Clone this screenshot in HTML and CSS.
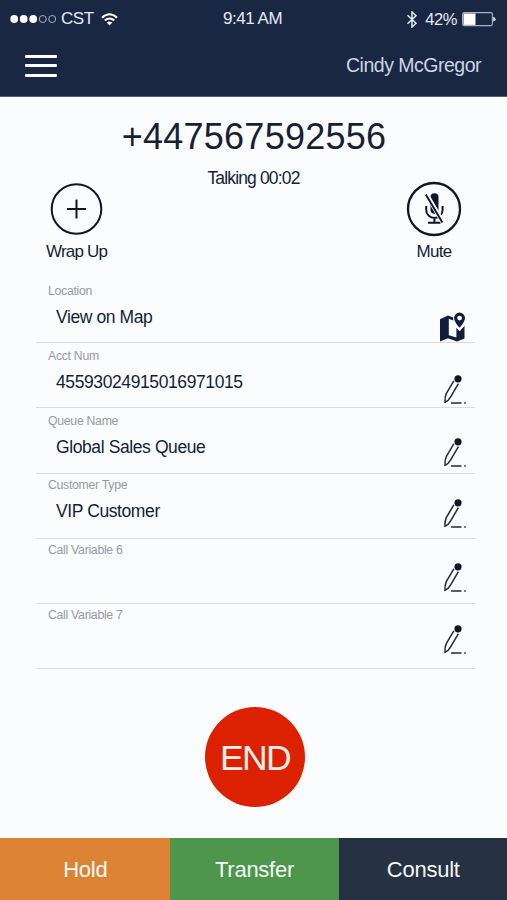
FILE: index.html
```html
<!DOCTYPE html>
<html lang="en">
<head>
<meta charset="utf-8">
<title>Call</title>
<link rel="stylesheet" href="styles.css">
</head>
<body>
<svg width="0" height="0" class="defs">
  <symbol id="pencil" viewBox="0 0 24 30">
    <circle cx="15" cy="3.8" r="3.6" fill="#10152a"/>
    <path d="M10.8 5.8 3.4 18.4Q1.7 22 2 27.2 5.6 25.8 7.8 21.6L15.4 8.6" fill="none" stroke="#282a31" stroke-width="1.5"/>
    <path d="M8 28h10.5M21.2 28h1.6" stroke="#282a31" stroke-width="1.3"/>
  </symbol>
</svg>
<header class="header">
  <div class="status">
    <div class="status-left">
      <svg width="46" height="12" viewBox="0 0 46 12"><g fill="#fff"><circle cx="4.2" cy="6" r="3.9"/><circle cx="13.7" cy="6" r="3.9"/><circle cx="23.2" cy="6" r="3.9"/></g><g fill="none" stroke="#a9b3c5" stroke-width="1"><circle cx="32.8" cy="6" r="3.5"/><circle cx="42.2" cy="6" r="3.5"/></g></svg>
      <span class="carrier">CST</span>
      <svg class="wifi" width="17" height="13" viewBox="0 0 17 13"><g fill="none" stroke="#fff" stroke-width="2"><path d="M1 4.7Q8.5-2.2 16 4.7"/><path d="M3.7 7.6Q8.5 3.3 13.3 7.6"/></g><path d="M5.7 9.6Q8.5 7.2 11.3 9.6L8.5 12.5Z" fill="#fff"/></svg>
    </div>
    <div class="time">9:41 AM</div>
    <div class="status-right">
      <svg width="12" height="17" viewBox="0 0 12 17"><path d="M1.5 4.3 10 12.3 6 16V1L10 4.7 1.5 12.7" fill="none" stroke="#e3ebf7" stroke-width="1.5"/></svg>
      <span class="percent">42%</span>
      <svg width="34" height="15" viewBox="0 0 34 15"><rect x=".6" y=".6" width="29.8" height="13" rx="1.5" fill="none" stroke="#a9b3c5" stroke-width="1.1"/><path d="M1.5 1.5h12v11.4h-12z" fill="#fff"/><path d="M31.2 4.8q2.4.6 2.4 2.4t-2.4 2.4z" fill="#d7dfec"/></svg>
    </div>
  </div>
  <div class="nav">
    <div class="menu"><i></i><i></i><i></i></div>
    <div class="user">Cindy McGregor</div>
  </div>
</header>
<main class="main">
  <h1 class="number">+447567592556</h1>
  <div class="state">Talking 00:02</div>
  <div class="actions">
    <div class="action">
      <svg width="54" height="54" viewBox="0 0 54 54" fill="none" stroke="#10152a" stroke-width="2"><circle cx="26.5" cy="27" r="24.8"/><path d="M17 27h19M26.5 17.5v19"/></svg>
      <span class="wrap-label">Wrap Up</span>
    </div>
    <div class="action">
      <svg width="56" height="56" viewBox="0 0 56 56" fill="none" stroke="#10152a"><circle cx="28" cy="28" r="26" stroke-width="2.3"/><rect x="24.5" y="12.3" width="8" height="20.5" rx="4" fill="#10152a" stroke="none"/><path d="M20.2 25v4a8.2 8 0 0 0 16.4 0v-4M28.4 37v5M22 41.8h12.6" stroke-width="2"/><path d="M20.4 13.4 37 41.4" stroke="#fafcfe" stroke-width="4.6"/><path d="M19.8 13.6 36.4 41.6" stroke-width="1.9"/></svg>
      <span class="mute-label">Mute</span>
    </div>
  </div>
  <section class="fields">
    <div class="field"><div><div class="label">Location</div><div class="value">View on Map</div></div>
      <svg class="map" width="28" height="30" viewBox="0 0 28 30"><path d="M1 7.2 9 3.6 14.2 5.4v3L9.8 6.7v16.6l7.6 2.3V15.5l3.2 3.7 4.9-5.6v13L18 29.6 9 26.2 1 29.4z" fill="#111d39"/><path d="M20.6.6a5.4 5.4 0 0 0-5.5 5.4c0 4 5.5 9.8 5.5 9.8S26 10 26 6A5.4 5.4 0 0 0 20.6.6zm0 3.1a2.4 2.4 0 1 1 0 4.8 2.4 2.4 0 0 1 0-4.8z" fill="#111d39"/><path d="m15.8 12.8 4.8 5.5 4.8-5.5" fill="none" stroke="#fafcfe" stroke-width="1.3"/></svg></div>
    <div class="field"><div><div class="label">Acct Num</div><div class="value digits">45593024915016971015</div></div><svg class="edit e1" width="24" height="30"><use href="#pencil"/></svg></div>
    <div class="field"><div><div class="label">Queue Name</div><div class="value">Global Sales Queue</div></div><svg class="edit e2" width="24" height="30"><use href="#pencil"/></svg></div>
    <div class="field"><div><div class="label">Customer Type</div><div class="value">VIP Customer</div></div><svg class="edit e3" width="24" height="30"><use href="#pencil"/></svg></div>
    <div class="field"><div><div class="label">Call Variable 6</div></div><svg class="edit e4" width="24" height="30"><use href="#pencil"/></svg></div>
    <div class="field"><div><div class="label">Call Variable 7</div></div><svg class="edit e5" width="24" height="30"><use href="#pencil"/></svg></div>
  </section>
  <div class="end"><span>END</span></div>
</main>
<footer class="footer">
  <div class="hold">Hold</div>
  <div class="transfer">Transfer</div>
  <div class="consult">Consult</div>
</footer>
</body>
</html>
```
FILE: styles.css
```css
* { box-sizing: border-box; }
body {
  margin: 0;
  width: 507px;
  height: 900px;
  overflow: hidden;
  display: flex;
  flex-direction: column;
  background: #fafcfe;
  color: #171e35;
  font-family: "Liberation Sans", Arial, sans-serif;
}
svg { display: block; flex: none; }
.defs { position: absolute; }
.header { height: 97px; background: #1a2742; border-bottom: 1px solid #545e73; color: #e3ebf7; flex: none; }
.status { height: 38px; padding: 0 11px 0 10px; display: grid; grid-template-columns: 1fr auto 1fr; align-items: center; font-size: 17px; letter-spacing: -.45px; white-space: nowrap; }
.status-left, .status-right { display: flex; align-items: center; }
.status-right { justify-content: flex-end; }
.carrier { margin-left: 5px; }
.wifi { margin-left: 7px; }
.time { margin-right: 1px; }
.percent { font-size: 16.5px; margin: 0 5px 0 7px; }
.nav { display: flex; justify-content: space-between; align-items: center; height: 55px; padding: 0 26px 0 25px; }
.menu { display: flex; flex-direction: column; gap: 6.5px; }
.menu i { width: 32px; height: 3px; border-radius: 1px; background: #fff; }
.user { font-size: 19.5px; letter-spacing: -.5px; color: #cdd5e2; }
.main { height: 741px; flex: none; display: flex; flex-direction: column; }
.number { margin: 19px 0 0; padding-left: 1px; text-align: center; font-size: 36px; font-weight: 400; line-height: 42px; letter-spacing: .25px; }
.state { margin-top: 10px; text-align: center; font-size: 17.5px; line-height: 20px; letter-spacing: -.85px; }
.actions { display: flex; justify-content: space-between; height: 89px; margin-top: -7px; padding: 0 45px 0 46px; font-size: 17px; line-height: 20px; }
.action { display: flex; flex-direction: column; align-items: center; justify-content: space-between; height: 81px; }
.action:first-child svg { margin-top: 1px; }
.wrap-label { letter-spacing: -.8px; }
.mute-label { letter-spacing: -.7px; }
.fields { margin: 8px 32px 0 36px; }
.field { height: 65.2px; border-bottom: 1px solid #d9dbde; display: flex; justify-content: space-between; padding: 0 8px 0 12px; }
.label { margin-top: 4.6px; font-size: 12.3px; line-height: 16px; letter-spacing: -.3px; color: #989a9f; }
.value { margin: 8.4px 0 0 8px; font-size: 17.5px; line-height: 20px; letter-spacing: -.4px; }
.field:nth-child(n+4) .label { margin-top: 3px; }
.map { margin-top: 34px; }
.e1 { margin-top: 32px; }
.e2 { margin-top: 29.5px; }
.e3 { margin-top: 25.5px; }
.e4 { margin-top: 24px; }
.e5 { margin-top: 21.5px; }
.end { width: 100px; height: 100px; border-radius: 50%; background: #dc2100; color: #fdeeea; margin: 38px auto 0 205px; display: flex; align-items: center; justify-content: center; font-size: 35.5px; letter-spacing: -1.7px; padding-top: 2px; }
.footer { flex: 1; display: grid; grid-template-columns: 169.5px 169px 1fr; color: #f4f7f6; font-size: 22px; letter-spacing: -.25px; }
.footer div { display: flex; align-items: center; justify-content: center; padding: 2px 0 0 1px; }
.hold { background: #dc8434; }
.transfer { background: #4d964c; }
.consult { background: #263144; }
```
